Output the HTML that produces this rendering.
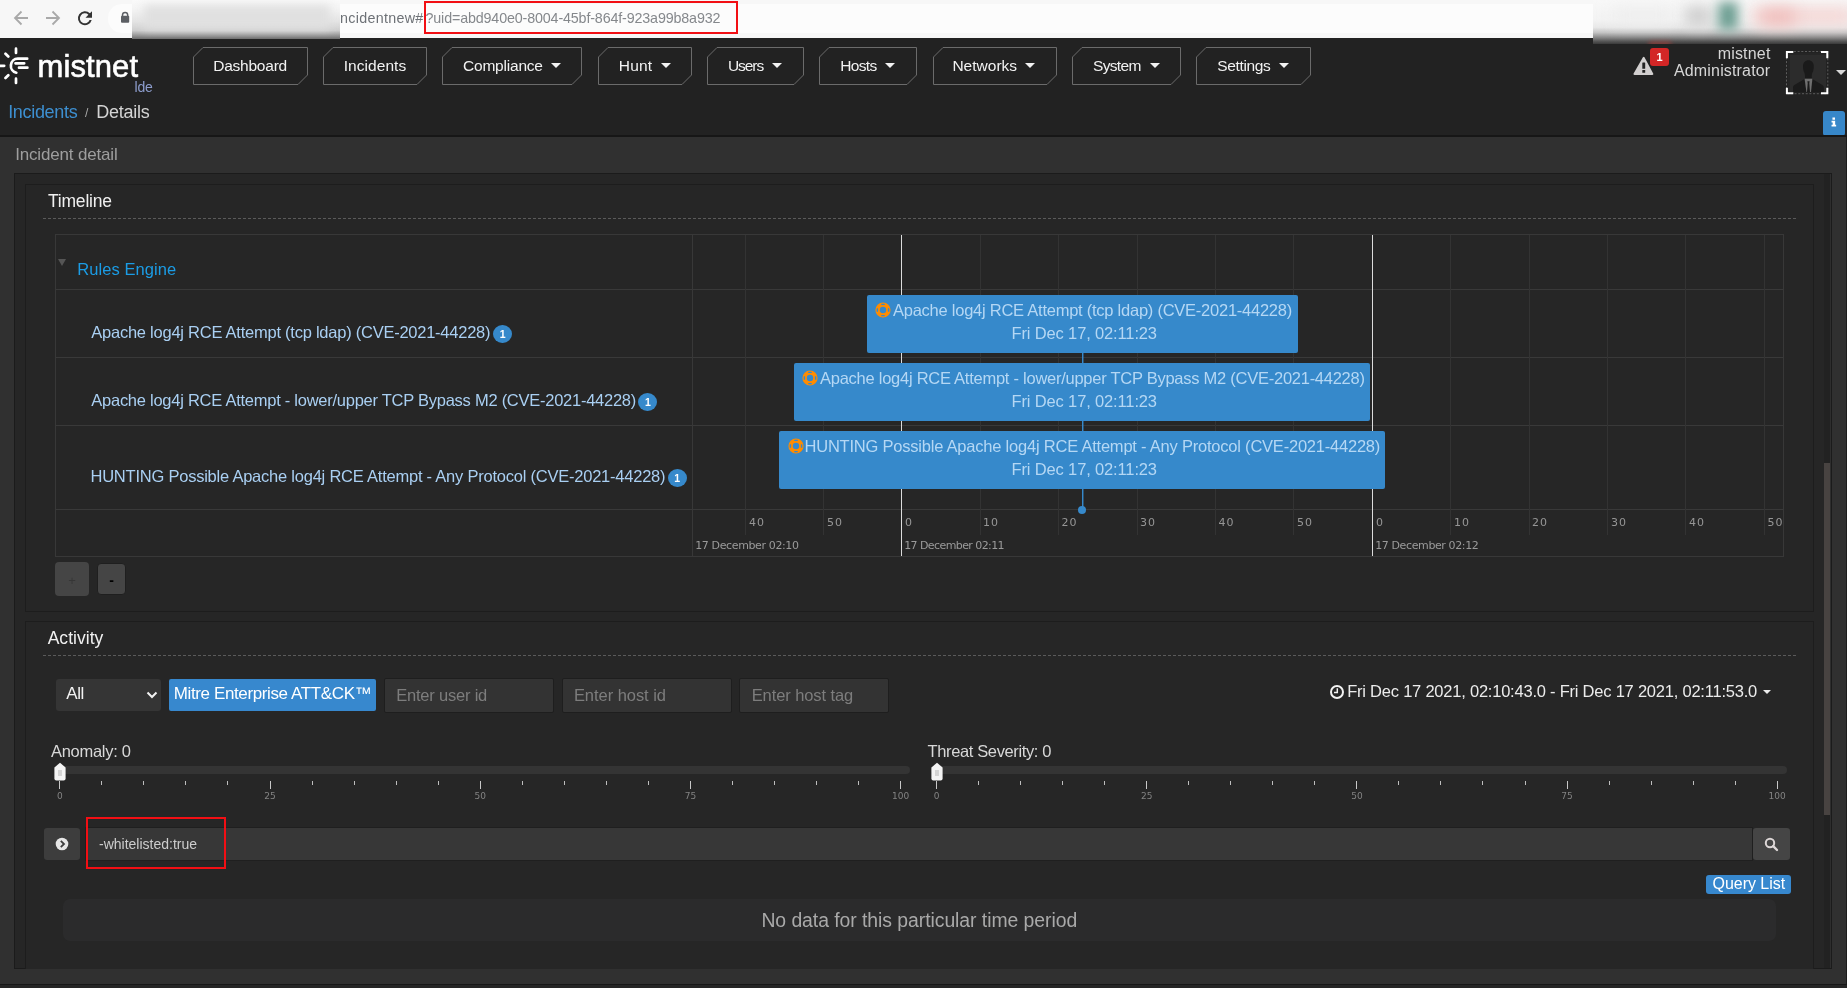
<!DOCTYPE html>
<html lang="en">
<head>
<meta charset="utf-8">
<title>mistnet - Incident detail</title>
<style>
*{box-sizing:border-box;margin:0;padding:0}
html,body{width:1847px;height:988px;overflow:hidden;background:#222222;font-family:"Liberation Sans",sans-serif;color:#ddd}
#root{will-change:transform;position:relative;width:1847px;height:988px;overflow:hidden;background:#222222}
.abs{position:absolute}
.t{position:absolute;white-space:nowrap;line-height:1}
/* browser bar */
#bar{left:0;top:0;width:1847px;height:38px;background:#f7f7f7}
#pill{left:108px;top:4px;width:1500px;height:29px;background:#fcfcfc;border-radius:14px}
.blur{position:absolute;filter:blur(2px)}
/* header */
#hdr{left:0;top:38px;width:1847px;height:98px;background:#222222}
.nb{position:absolute;top:47px;height:38px}
.nb svg{position:absolute;left:0;top:0}
.nb span{position:absolute;top:10px;font-size:15.5px;line-height:18px;color:#f2f2f2;white-space:nowrap}
.nb i{position:absolute;top:16px;width:0;height:0;border-left:5.5px solid transparent;border-right:5.5px solid transparent;border-top:5.5px solid #f2f2f2}
/* panels */
#outer{left:0;top:137px;width:1847px;height:847px;background:#303030}
#body{left:14px;top:173px;width:1818px;height:796px;background:#262626;border:1px solid #1b1b1b}
.panel{position:absolute;background:#262626;border:1px solid #1d1d1d}
.dash{position:absolute;height:1px;background:repeating-linear-gradient(90deg,#5a5a5a 0 3px,transparent 3px 5px)}
.hl{position:absolute;height:1px;background:#393939}
.vl{position:absolute;width:1px;background:#333333}
.vm{position:absolute;width:2px;background:#d8d8d8}
.item{position:absolute;height:58px;background:#3689cb;border-radius:2px}
.item .t{color:#b4d7f4;font-size:16.5px}
.lab{color:#a9cff2;font-size:16.5px}
.badge{position:absolute;width:19px;height:18.4px;border-radius:9.5px/9.2px;background:#3689cb;color:#fff;font-size:10.5px;font-weight:bold;text-align:center;line-height:18px}
.ax{color:#969696;font-size:11px;font-family:'DejaVu Sans','Liberation Sans',sans-serif}
.inp{position:absolute;background:#333333;border:1px solid #1e1e1e;border-radius:2px}
.ph{color:#7d7d7d;font-size:16.5px}
.tick{position:absolute;width:1px;background:#cfcfcf}
.tl{color:#838383;font-size:9px;font-family:'DejaVu Sans','Liberation Sans',sans-serif}
</style>
</head>
<body>
<div id="root">

<!-- ============ browser bar ============ -->
<div id="hdr" class="abs"></div>
<div id="bar" class="abs"></div>
<div id="pill" class="abs"></div>
<svg class="abs" style="left:0;top:0" width="140" height="38" viewBox="0 0 140 38">
  <g fill="none" stroke="#a9a9a9" stroke-width="1.8" stroke-linecap="butt" stroke-linejoin="miter">
    <path d="M28 18H15.5M21.5 11.5L15 18l6.500 6.500"/>
    <path d="M46 18h12.500M52.500 11.500L59 18l-6.500 6.500"/>
  </g>
  <path transform="translate(-0.8 0)" d="M90.700 13.300A7 7 0 1 0 92.500 20h-2.100a5 5 0 1 1-1.200-5.200L86.300 17.700H92.800V11.200z" fill="#333333"/>
  <path d="M122.500 16.500v-1.500a2.600 2.600 0 0 1 5.200 0v1.500" fill="none" stroke="#5c5f64" stroke-width="1.500"/>
  <rect x="121" y="15.800" width="8.200" height="7" rx="1" fill="#5c5f64"/>
</svg>
<div class="t" id="url1" style="left:340px;top:10px;font-size:14.300px;line-height:16px;color:#6d7176;letter-spacing:0.302px">ncidentnew#</div>
<div class="t" id="url2" style="left:425.500px;top:10px;font-size:14.300px;line-height:16px;color:#85888c;letter-spacing:-0.148px">?uid=abd940e0-8004-45bf-864f-923a99b8a932</div>
<div class="abs" style="left:132px;top:0;width:208px;height:39px;overflow:hidden">
  <div class="abs" style="left:0;top:0;width:208px;height:39px;background:linear-gradient(180deg,#fafafa 0,#f3f3f3 25%,#e4e4e4 55%,#cfcfcf 78%,#8e8e8e 93%,#6d6d6d 100%)"></div>
  <div class="blur" style="left:12px;top:5px;width:186px;height:24px;background:#e0e0e0;filter:blur(5px)"></div>
</div>
<div class="abs" style="left:1593px;top:0;width:254px;height:44px;overflow:hidden">
  <div class="abs" style="left:0;top:0;width:254px;height:44px;background:linear-gradient(180deg,#f8f8f8 0,#f3f3f3 45%,#e9e9e9 62%,#c4c4c4 74%,#8a8a8a 85%,#555555 94%,#3a3a3a 100%)"></div>
  <div class="blur" style="left:92px;top:6px;width:26px;height:20px;background:#cfcfcf;filter:blur(7px)"></div>
  <div class="blur" style="left:125px;top:2px;width:20px;height:28px;background:#6d9e92;filter:blur(6px)"></div>
  <div class="blur" style="left:160px;top:8px;width:100px;height:16px;background:#f5d3d1;filter:blur(8px)"></div>
  <div class="blur" style="left:168px;top:10px;width:34px;height:14px;background:#efb9b7;filter:blur(8px)"></div>
  <div class="blur" style="left:20px;top:8px;width:60px;height:14px;background:#ededed;filter:blur(8px)"></div>
  <div class="blur" style="left:56px;top:42px;width:22px;height:5px;background:#b9403c;filter:blur(2.500px);opacity:.7"></div>
</div>
<div class="abs" style="left:424px;top:1px;width:314px;height:33px;border:2px solid #f20f14"></div>
<!--BAR-->

<!-- ============ app header ============ -->
<svg class="abs" style="left:0;top:44px" width="34" height="44" viewBox="0 44 34 44">
 <g fill="none" stroke="#ffffff" stroke-width="2.700" stroke-linecap="round">
  <path d="M16 48.700V53M16 78.700V83M5.500 53.700L8.300 56.500M5.500 78L8.300 75.200M0 65.800H4.200"/>
  <path d="M27.200 58.700H17.800A7.100 7.100 0 0 0 16.300 72.700"/>
  <path d="M15.500 63.300H24.200M19 67.700H27.400"/>
 </g>
</svg>
<div class="t" id="logo" style="left:37.500px;top:48.700px;font-size:31px;line-height:36px;color:#fff;-webkit-text-stroke:0.600px #fff;letter-spacing:0.096px">mistnet</div>
<div class="t" id="lde" style="left:134.500px;top:80.200px;font-size:14px;line-height:15px;color:#8d9dcd;letter-spacing:-0.178px">lde</div>
<div class="t" id="bc1" style="left:8.200px;top:101.500px;font-size:18px;line-height:20px;color:#3d8fd0;letter-spacing:-0.320px">Incidents</div>
<div class="t" id="bc2" style="left:85px;top:105.700px;font-size:12px;line-height:14px;color:#aaa">/</div>
<div class="t" id="bc3" style="left:96.200px;top:101.500px;font-size:18px;line-height:20px;color:#d4d4d4;letter-spacing:-0.255px">Details</div>

<div class="nb" style="left:193px;width:115px"><svg width="115" height="38"><polygon points="10,0.5 114.5,0.5 114.5,28 105,37.5 0.5,37.5 0.5,10" fill="none" stroke="#6b6b6b" stroke-width="1"/></svg><span id="nb0" style="left:20.200px;letter-spacing:-0.229px">Dashboard</span></div>
<div class="nb" style="left:323px;width:104px"><svg width="104" height="38"><polygon points="10,0.5 103.5,0.5 103.5,28 94,37.5 0.5,37.5 0.5,10" fill="none" stroke="#6b6b6b" stroke-width="1"/></svg><span id="nb1" style="left:20.700px;letter-spacing:0.056px">Incidents</span></div>
<div class="nb" style="left:442px;width:140px"><svg width="140" height="38"><polygon points="10,0.5 139.5,0.5 139.5,28 130,37.5 0.5,37.5 0.5,10" fill="none" stroke="#6b6b6b" stroke-width="1"/></svg><span id="nb2" style="left:21.000px;letter-spacing:-0.206px">Compliance</span><i style="left:109.0px"></i></div>
<div class="nb" style="left:598px;width:94px"><svg width="94" height="38"><polygon points="10,0.5 93.5,0.5 93.5,28 84,37.5 0.5,37.5 0.5,10" fill="none" stroke="#6b6b6b" stroke-width="1"/></svg><span id="nb3" style="left:20.700px;letter-spacing:0.249px">Hunt</span><i style="left:62.6px"></i></div>
<div class="nb" style="left:707px;width:97px"><svg width="97" height="38"><polygon points="10,0.5 96.5,0.5 96.5,28 87,37.5 0.5,37.5 0.5,10" fill="none" stroke="#6b6b6b" stroke-width="1"/></svg><span id="nb4" style="left:20.960px;letter-spacing:-1.073px">Users</span><i style="left:65.0px"></i></div>
<div class="nb" style="left:819px;width:98px"><svg width="98" height="38"><polygon points="10,0.5 97.5,0.5 97.5,28 88,37.5 0.5,37.5 0.5,10" fill="none" stroke="#6b6b6b" stroke-width="1"/></svg><span id="nb5" style="left:21.200px;letter-spacing:-0.656px">Hosts</span><i style="left:66.3px"></i></div>
<div class="nb" style="left:933px;width:124px"><svg width="124" height="38"><polygon points="10,0.5 123.5,0.5 123.5,28 114,37.5 0.5,37.5 0.5,10" fill="none" stroke="#6b6b6b" stroke-width="1"/></svg><span id="nb6" style="left:19.420px;letter-spacing:0.013px">Networks</span><i style="left:91.7px"></i></div>
<div class="nb" style="left:1072px;width:109px"><svg width="109" height="38"><polygon points="10,0.5 108.5,0.5 108.5,28 99,37.5 0.5,37.5 0.5,10" fill="none" stroke="#6b6b6b" stroke-width="1"/></svg><span id="nb7" style="left:21.000px;letter-spacing:-0.656px">System</span><i style="left:77.5px"></i></div>
<div class="nb" style="left:1196px;width:115px"><svg width="115" height="38"><polygon points="10,0.5 114.5,0.5 114.5,28 105,37.5 0.5,37.5 0.5,10" fill="none" stroke="#6b6b6b" stroke-width="1"/></svg><span id="nb8" style="left:21.240px;letter-spacing:-0.345px">Settings</span><i style="left:83.0px"></i></div>

<svg class="abs" style="left:1631px;top:54px" width="26" height="24" viewBox="0 0 26 24">
 <path d="M11.900 3.200L2.600 19.500a1 1 0 0 0 .9 1.500H21.300a1 1 0 0 0 .9-1.500L13.500 3.200a.9.900 0 0 0-1.600 0z" fill="#d2cfcf"/>
 <rect x="11.300" y="8.500" width="2.900" height="6.300" rx=".4" fill="#222"/><rect x="11.300" y="16.100" width="2.900" height="2.700" rx=".4" fill="#222"/>
</svg>
<div class="abs" style="left:1650px;top:48px;width:19px;height:18px;background:#d32626;border-radius:3px;color:#fff;font-size:11px;font-weight:bold;text-align:center;line-height:18px">1</div>
<div class="t" id="u1" style="left:1717.680px;top:45px;font-size:16px;line-height:18px;color:#d6d6d6;letter-spacing:0.187px">mistnet</div>
<div class="t" id="u2" style="left:1673.980px;top:62px;font-size:16px;line-height:18px;color:#d6d6d6;letter-spacing:0.162px">Administrator</div>
<svg class="abs" style="left:1785px;top:50px" width="45" height="45" viewBox="0 0 45 45"><rect x="1.500" y="1.500" width="41.300" height="42.200" fill="none" stroke="#5c5c5c" stroke-width="1" stroke-dasharray="2 1.700"/></svg>
<div class="abs" style="left:1788px;top:53px;width:38px;height:39px;background:#252525"></div>
<div class="abs" style="left:1790px;top:55px;width:36px;height:37px;background:#2c2c2c;overflow:hidden">
 <svg width="36" height="37" viewBox="0 0 36 37"><path d="M18.400 5.200c3.200 0 5.400 2.300 5.400 6.200 0 2.300-.4 4.300-1.300 6.200-.5 1.100-.9 2.700-.7 5.600h-6.800c.2-2.900-.2-4.500-.7-5.600-.9-1.900-1.300-3.900-1.300-6.200 0-3.900 2.200-6.200 5.400-6.200z" fill="#1a1a1a"/><path d="M3 37V32.500c0-1.200.6-2 1.800-2.700L15 23.800h6.800l10.200 6c1.200.7 1.800 1.500 1.800 2.700V37z" fill="#1b1b1b"/><path d="M14.600 23.800h7.800L21 37h-4.600z" fill="#6f6f6f"/><path d="M17.400 26.300h2.200l-.3 2 .7 8.700h-3l.7-8.700z" fill="#1b1b1b"/></svg>
</div>
<svg class="abs" style="left:1785px;top:50px" width="45" height="45" viewBox="0 0 45 45"><g fill="none" stroke="#fff" stroke-width="2"><path d="M1.900 8.300V1.900H8.300M36 1.900H42.300V8.300M42.300 37.800V43.200H36M8.300 43.200H1.900V37.800"/></g></svg>
<div class="abs" style="left:1836px;top:70px;width:0;height:0;border-left:5.500px solid transparent;border-right:5.500px solid transparent;border-top:5.500px solid #d8d8d8"></div>
<div class="abs" style="left:1823px;top:111px;width:22px;height:25px;background:#3787c9;border-radius:3px"></div>
<svg class="abs" style="left:1830.300px;top:117.300px" width="7.700" height="10" viewBox="0 0 10 13"><path d="M3.200 0.500h3.300v3H3.200zM2 5h4.700v5H8v2.300H2V10h1.500V7.200H2z" fill="#fff"/></svg>

<!--HDR-->

<!-- ============ panels ============ -->
<div id="outer" class="abs"></div>
<div class="abs" style="left:0;top:135px;width:1847px;height:2px;background:#161616"></div>
<div class="abs" style="left:0;top:984px;width:1847px;height:1px;background:#171717"></div>
<div class="abs" style="left:0;top:985px;width:1847px;height:3px;background:#252525"></div>
<div class="abs" style="left:1846px;top:137px;width:1px;height:847px;background:#1c1c1c"></div>
<div id="body" class="abs"></div>
<div class="t" id="idt" style="left:15.200px;top:145px;font-size:17px;line-height:20px;color:#9e9e9e;letter-spacing:-0.172px">Incident detail</div>
<div class="abs" style="left:1824px;top:174px;width:6px;height:794px;background:#222222"></div>
<div class="abs" style="left:1824px;top:463px;width:6px;height:352px;background:#484341"></div>
<div class="abs" style="left:1830px;top:174px;width:1px;height:794px;background:#2e2e2e"></div>
<div class="panel" style="left:25px;top:184px;width:1789px;height:428px"></div>
<div class="t" id="tlh" style="left:48.000px;top:191px;font-size:17.500px;line-height:20px;color:#f0f0f0;letter-spacing:-0.212px">Timeline</div>
<div class="dash" style="left:43px;top:218px;width:1753px"></div>
<div class="abs" style="left:55px;top:234px;width:1729px;height:323px;border:1px solid #383838"></div>
<div class="hl" style="left:56px;top:289px;width:1727px"></div>
<div class="hl" style="left:56px;top:357px;width:1727px"></div>
<div class="hl" style="left:56px;top:425px;width:1727px"></div>
<div class="hl" style="left:56px;top:509px;width:1727px"></div>
<div class="vl" style="left:745px;top:235px;height:300px"></div>
<div class="vl" style="left:823px;top:235px;height:300px"></div>
<div class="vl" style="left:980px;top:235px;height:300px"></div>
<div class="vl" style="left:1058px;top:235px;height:300px"></div>
<div class="vl" style="left:1137px;top:235px;height:300px"></div>
<div class="vl" style="left:1215px;top:235px;height:300px"></div>
<div class="vl" style="left:1293px;top:235px;height:300px"></div>
<div class="vl" style="left:1450px;top:235px;height:300px"></div>
<div class="vl" style="left:1529px;top:235px;height:300px"></div>
<div class="vl" style="left:1607px;top:235px;height:300px"></div>
<div class="vl" style="left:1685px;top:235px;height:300px"></div>
<div class="vl" style="left:1764px;top:235px;height:300px"></div>
<div class="vl" style="left:692px;top:235px;height:321px;background:#383838"></div>
<div class="abs" style="left:901px;top:235px;width:1px;height:321px;background:#dcdcdc"></div>
<div class="abs" style="left:1372px;top:235px;width:1px;height:321px;background:#dcdcdc"></div>
<div class="abs" style="left:58px;top:259px;width:0;height:0;border-left:4px solid transparent;border-right:4px solid transparent;border-top:7px solid #555"></div>
<div class="t" id="re" style="left:77.200px;top:260px;font-size:16.500px;line-height:19px;color:#1b9ce5;letter-spacing:0.077px">Rules Engine</div>
<div class="t lab" id="lab0" style="left:91.300px;top:323px;line-height:19px;letter-spacing:-0.247px">Apache log4j RCE Attempt (tcp ldap) (CVE-2021-44228)</div>
<div class="badge" style="left:493.200px;top:324.800px">1</div>
<div class="t lab" id="lab1" style="left:91.300px;top:391px;line-height:19px;letter-spacing:-0.258px">Apache log4j RCE Attempt - lower/upper TCP Bypass M2 (CVE-2021-44228)</div>
<div class="badge" style="left:638.300px;top:392.800px">1</div>
<div class="t lab" id="lab2" style="left:90.500px;top:467px;line-height:19px;letter-spacing:-0.229px">HUNTING Possible Apache log4j RCE Attempt - Any Protocol (CVE-2021-44228)</div>
<div class="badge" style="left:667.600px;top:468.800px">1</div>
<div class="abs" style="left:1082px;top:295px;width:1px;height:215px;background:#3689cb;box-shadow:1px 0 0 rgba(54,137,203,.45)"></div>
<div class="abs" style="left:1078px;top:506px;width:8px;height:8px;border-radius:4px;background:#3689cb"></div>
<div class="item" style="left:867px;top:295px;width:431px"><svg class="abs" style="left:8.0px;top:7px" width="16" height="16" viewBox="0 0 16 16"><circle cx="8" cy="8" r="5.400" fill="none" stroke="#ff8c00" stroke-width="4.400"/><g fill="#3689cb"><rect x="6.200" y="1.700" width="3.600" height="1.400" rx=".5"/><rect x="6.200" y="12.900" width="3.600" height="1.400" rx=".5"/><rect x="1.700" y="6.200" width="1.400" height="3.600" rx=".5"/><rect x="12.900" y="6.200" width="1.400" height="3.600" rx=".5"/></g></svg><div class="t" id="it0" style="left:26.0px;top:6px;line-height:19px;letter-spacing:-0.247px">Apache log4j RCE Attempt (tcp ldap) (CVE-2021-44228)</div><div class="t" id="itd0" style="left:144.540px;top:29px;line-height:19px;letter-spacing:-0.146px">Fri Dec 17, 02:11:23</div></div>
<div class="item" style="left:794px;top:363px;width:576px"><svg class="abs" style="left:8.0px;top:7px" width="16" height="16" viewBox="0 0 16 16"><circle cx="8" cy="8" r="5.400" fill="none" stroke="#ff8c00" stroke-width="4.400"/><g fill="#3689cb"><rect x="6.200" y="1.700" width="3.600" height="1.400" rx=".5"/><rect x="6.200" y="12.900" width="3.600" height="1.400" rx=".5"/><rect x="1.700" y="6.200" width="1.400" height="3.600" rx=".5"/><rect x="12.900" y="6.200" width="1.400" height="3.600" rx=".5"/></g></svg><div class="t" id="it1" style="left:26.0px;top:6px;line-height:19px;letter-spacing:-0.258px">Apache log4j RCE Attempt - lower/upper TCP Bypass M2 (CVE-2021-44228)</div><div class="t" id="itd1" style="left:217.540px;top:29px;line-height:19px;letter-spacing:-0.146px">Fri Dec 17, 02:11:23</div></div>
<div class="item" style="left:779px;top:431px;width:606px"><svg class="abs" style="left:8.5px;top:7px" width="16" height="16" viewBox="0 0 16 16"><circle cx="8" cy="8" r="5.400" fill="none" stroke="#ff8c00" stroke-width="4.400"/><g fill="#3689cb"><rect x="6.200" y="1.700" width="3.600" height="1.400" rx=".5"/><rect x="6.200" y="12.900" width="3.600" height="1.400" rx=".5"/><rect x="1.700" y="6.200" width="1.400" height="3.600" rx=".5"/><rect x="12.900" y="6.200" width="1.400" height="3.600" rx=".5"/></g></svg><div class="t" id="it2" style="left:25.500px;top:6px;line-height:19px;letter-spacing:-0.218px">HUNTING Possible Apache log4j RCE Attempt - Any Protocol (CVE-2021-44228)</div><div class="t" id="itd2" style="left:232.540px;top:29px;line-height:19px;letter-spacing:-0.146px">Fri Dec 17, 02:11:23</div></div>
<div class="t ax" id="mn0" style="left:749px;top:516.300px;line-height:14px;letter-spacing:0.9px">40</div>
<div class="t ax" id="mn1" style="left:827px;top:516.300px;line-height:14px;letter-spacing:0.9px">50</div>
<div class="t ax" id="mn2" style="left:905px;top:516.300px;line-height:14px;letter-spacing:0.9px">0</div>
<div class="t ax" id="mn3" style="left:983px;top:516.300px;line-height:14px;letter-spacing:0.9px">10</div>
<div class="t ax" id="mn4" style="left:1061.5px;top:516.300px;line-height:14px;letter-spacing:0.9px">20</div>
<div class="t ax" id="mn5" style="left:1140px;top:516.300px;line-height:14px;letter-spacing:0.9px">30</div>
<div class="t ax" id="mn6" style="left:1218.5px;top:516.300px;line-height:14px;letter-spacing:0.9px">40</div>
<div class="t ax" id="mn7" style="left:1297px;top:516.300px;line-height:14px;letter-spacing:0.9px">50</div>
<div class="t ax" id="mn8" style="left:1376px;top:516.300px;line-height:14px;letter-spacing:0.9px">0</div>
<div class="t ax" id="mn9" style="left:1454px;top:516.300px;line-height:14px;letter-spacing:0.9px">10</div>
<div class="t ax" id="mn10" style="left:1532px;top:516.300px;line-height:14px;letter-spacing:0.9px">20</div>
<div class="t ax" id="mn11" style="left:1611px;top:516.300px;line-height:14px;letter-spacing:0.9px">30</div>
<div class="t ax" id="mn12" style="left:1689px;top:516.300px;line-height:14px;letter-spacing:0.9px">40</div>
<div class="t ax" id="mn13" style="left:1767.5px;top:516.300px;line-height:14px;letter-spacing:0.9px">50</div>
<div class="t ax" id="mj0" style="left:695.200px;top:539.300px;line-height:14px;color:#9a9a9a;letter-spacing:-0.371px">17 December 02:10</div>
<div class="t ax" id="mj1" style="left:904.200px;top:539.300px;line-height:14px;color:#9a9a9a;letter-spacing:-0.584px">17 December 02:11</div>
<div class="t ax" id="mj2" style="left:1375.200px;top:539.300px;line-height:14px;color:#9a9a9a;letter-spacing:-0.384px">17 December 02:12</div>
<div class="abs" style="left:55px;top:562px;width:34px;height:34px;background:#454545;border-radius:4px"></div><div class="t" style="left:68.300px;top:572.800px;font-size:13px;line-height:16px;color:#363636">+</div>
<div class="abs" style="left:97px;top:563px;width:29px;height:32px;background:#454545;border:1px solid #1f1f1f;border-radius:4px"></div><div class="t" style="left:109.300px;top:571.500px;font-size:14px;line-height:16px;font-weight:bold;color:#000">-</div>
<div class="panel" style="left:25px;top:621px;width:1789px;height:348px;border-bottom:none"></div>
<div class="t" id="ach" style="left:47.680px;top:628px;font-size:17.500px;line-height:20px;color:#f0f0f0;letter-spacing:0.025px">Activity</div>
<div class="dash" style="left:43px;top:655px;width:1753px"></div>
<div class="abs" style="left:56px;top:679px;width:105px;height:32px;background:#353535;border-radius:3px"></div>
<div class="t" id="all" style="left:66.300px;top:684px;font-size:17px;line-height:20px;color:#f2f2f2;letter-spacing:-0.453px">All</div>
<svg class="abs" style="left:146px;top:690px" width="12" height="10" viewBox="0 0 12 10"><path d="M1.500 2.500L6 7l4.500-4.500" fill="none" stroke="#f2f2f2" stroke-width="2"/></svg>
<div class="abs" style="left:169px;top:679px;width:207px;height:32px;background:#3788ce;border-radius:2px"></div>
<div class="t" id="mitre" style="left:173.700px;top:684px;font-size:17px;line-height:20px;color:#fff;letter-spacing:-0.373px">Mitre Enterprise ATT&amp;CK™</div>
<div class="inp" style="left:384px;top:678px;width:169.5px;height:35px"></div>
<div class="t ph" id="ph0" style="left:396.200px;top:685px;line-height:20px;letter-spacing:-0.204px">Enter user id</div>
<div class="inp" style="left:562px;top:678px;width:169.70000000000005px;height:35px"></div>
<div class="t ph" id="ph1" style="left:573.880px;top:685px;line-height:20px;letter-spacing:-0.045px">Enter host id</div>
<div class="inp" style="left:739.3px;top:678px;width:149.4000000000001px;height:35px"></div>
<div class="t ph" id="ph2" style="left:751.660px;top:685px;line-height:20px;letter-spacing:-0.089px">Enter host tag</div>
<svg class="abs" style="left:1328.500px;top:684px" width="16" height="16" viewBox="0 0 16 16"><circle cx="8" cy="8" r="6" fill="none" stroke="#f2f2f2" stroke-width="2"/><path d="M8.300 4.300V8.500H5" fill="none" stroke="#f2f2f2" stroke-width="1.500"/></svg>
<div class="t" id="dr" style="left:1347.200px;top:681px;font-size:16.500px;line-height:20px;color:#ececec;letter-spacing:-0.224px">Fri Dec 17 2021, 02:10:43.0 - Fri Dec 17 2021, 02:11:53.0</div>
<div class="abs" style="left:1763px;top:690px;width:0;height:0;border-left:4.500px solid transparent;border-right:4.500px solid transparent;border-top:4.500px solid #ececec"></div>
<div class="t" id="an" style="left:51.000px;top:741px;font-size:16.500px;line-height:20px;color:#d8d8d8;letter-spacing:-0.283px">Anomaly: 0</div>
<div class="abs" style="left:55px;top:766px;width:855px;height:8px;background:#343434;border-radius:4px"></div>
<svg class="abs" style="left:53px;top:762px" width="14" height="20" viewBox="0 0 14 20"><path d="M7 0.800L12.600 5.500V16.500a2 2 0 0 1-2 2H3.400a2 2 0 0 1-2-2V5.500z" fill="#f4f4f4"/><path d="M6 8v6M8 8v6" stroke="#b5b5b5" stroke-width="1"/></svg>
<div class="tick" style="left:59px;top:781px;height:8px;background:#c8c8c8"></div>
<div class="tick" style="left:101px;top:781px;height:4px;background:#bdbdbd"></div>
<div class="tick" style="left:143px;top:781px;height:4px;background:#bdbdbd"></div>
<div class="tick" style="left:185px;top:781px;height:4px;background:#bdbdbd"></div>
<div class="tick" style="left:227px;top:781px;height:4px;background:#bdbdbd"></div>
<div class="tick" style="left:270px;top:781px;height:8px;background:#c8c8c8"></div>
<div class="tick" style="left:312px;top:781px;height:4px;background:#bdbdbd"></div>
<div class="tick" style="left:354px;top:781px;height:4px;background:#bdbdbd"></div>
<div class="tick" style="left:396px;top:781px;height:4px;background:#bdbdbd"></div>
<div class="tick" style="left:438px;top:781px;height:4px;background:#bdbdbd"></div>
<div class="tick" style="left:480px;top:781px;height:8px;background:#c8c8c8"></div>
<div class="tick" style="left:522px;top:781px;height:4px;background:#bdbdbd"></div>
<div class="tick" style="left:564px;top:781px;height:4px;background:#bdbdbd"></div>
<div class="tick" style="left:606px;top:781px;height:4px;background:#bdbdbd"></div>
<div class="tick" style="left:648px;top:781px;height:4px;background:#bdbdbd"></div>
<div class="tick" style="left:690px;top:781px;height:8px;background:#c8c8c8"></div>
<div class="tick" style="left:732px;top:781px;height:4px;background:#bdbdbd"></div>
<div class="tick" style="left:774px;top:781px;height:4px;background:#bdbdbd"></div>
<div class="tick" style="left:816px;top:781px;height:4px;background:#bdbdbd"></div>
<div class="tick" style="left:858px;top:781px;height:4px;background:#bdbdbd"></div>
<div class="tick" style="left:900px;top:781px;height:8px;background:#c8c8c8"></div>
<div class="t tl" style="left:44.8px;top:791px;width:30px;text-align:center;line-height:10px">0</div>
<div class="t tl" style="left:255.0px;top:791px;width:30px;text-align:center;line-height:10px">25</div>
<div class="t tl" style="left:465.2px;top:791px;width:30px;text-align:center;line-height:10px">50</div>
<div class="t tl" style="left:675.4px;top:791px;width:30px;text-align:center;line-height:10px">75</div>
<div class="t tl" style="left:885.6px;top:791px;width:30px;text-align:center;line-height:10px">100</div>
<div class="t" id="ts" style="left:927.500px;top:741px;font-size:16.500px;line-height:20px;color:#d8d8d8;letter-spacing:-0.367px">Threat Severity: 0</div>
<div class="abs" style="left:931px;top:766px;width:855.5px;height:8px;background:#343434;border-radius:4px"></div>
<svg class="abs" style="left:930px;top:762px" width="14" height="20" viewBox="0 0 14 20"><path d="M7 0.800L12.600 5.500V16.500a2 2 0 0 1-2 2H3.400a2 2 0 0 1-2-2V5.500z" fill="#f4f4f4"/><path d="M6 8v6M8 8v6" stroke="#b5b5b5" stroke-width="1"/></svg>
<div class="tick" style="left:936px;top:781px;height:8px;background:#c8c8c8"></div>
<div class="tick" style="left:978px;top:781px;height:4px;background:#bdbdbd"></div>
<div class="tick" style="left:1020px;top:781px;height:4px;background:#bdbdbd"></div>
<div class="tick" style="left:1062px;top:781px;height:4px;background:#bdbdbd"></div>
<div class="tick" style="left:1104px;top:781px;height:4px;background:#bdbdbd"></div>
<div class="tick" style="left:1146px;top:781px;height:8px;background:#c8c8c8"></div>
<div class="tick" style="left:1188px;top:781px;height:4px;background:#bdbdbd"></div>
<div class="tick" style="left:1230px;top:781px;height:4px;background:#bdbdbd"></div>
<div class="tick" style="left:1272px;top:781px;height:4px;background:#bdbdbd"></div>
<div class="tick" style="left:1314px;top:781px;height:4px;background:#bdbdbd"></div>
<div class="tick" style="left:1356px;top:781px;height:8px;background:#c8c8c8"></div>
<div class="tick" style="left:1398px;top:781px;height:4px;background:#bdbdbd"></div>
<div class="tick" style="left:1440px;top:781px;height:4px;background:#bdbdbd"></div>
<div class="tick" style="left:1482px;top:781px;height:4px;background:#bdbdbd"></div>
<div class="tick" style="left:1525px;top:781px;height:4px;background:#bdbdbd"></div>
<div class="tick" style="left:1567px;top:781px;height:8px;background:#c8c8c8"></div>
<div class="tick" style="left:1609px;top:781px;height:4px;background:#bdbdbd"></div>
<div class="tick" style="left:1651px;top:781px;height:4px;background:#bdbdbd"></div>
<div class="tick" style="left:1693px;top:781px;height:4px;background:#bdbdbd"></div>
<div class="tick" style="left:1735px;top:781px;height:4px;background:#bdbdbd"></div>
<div class="tick" style="left:1777px;top:781px;height:8px;background:#c8c8c8"></div>
<div class="t tl" style="left:921.6px;top:791px;width:30px;text-align:center;line-height:10px">0</div>
<div class="t tl" style="left:1131.8px;top:791px;width:30px;text-align:center;line-height:10px">25</div>
<div class="t tl" style="left:1341.9px;top:791px;width:30px;text-align:center;line-height:10px">50</div>
<div class="t tl" style="left:1552.1px;top:791px;width:30px;text-align:center;line-height:10px">75</div>
<div class="t tl" style="left:1762.2px;top:791px;width:30px;text-align:center;line-height:10px">100</div>
<div class="abs" style="left:44px;top:828px;width:36px;height:32px;background:#3d3d3d;border-radius:3px"></div>
<svg class="abs" style="left:55px;top:837px" width="14" height="14" viewBox="0 0 14 14"><circle cx="7" cy="7" r="6.300" fill="#e6e6e6"/><path d="M5.800 3.800L9 7l-3.200 3.200" fill="none" stroke="#3d3d3d" stroke-width="1.800"/></svg>
<div class="abs" style="left:85px;top:827px;width:1668px;height:34px;background:#373737;border:1px solid #1f1f1f"></div>
<div class="t" id="q" style="left:99.000px;top:836px;font-size:14px;line-height:16px;color:#cdcdcd;letter-spacing:-0.003px">-whitelisted:true</div>
<div class="abs" style="left:1753px;top:828px;width:37px;height:32px;background:#454545;border-radius:3px"></div>
<svg class="abs" style="left:1764px;top:837px" width="15" height="15" viewBox="0 0 15 15"><circle cx="6" cy="6" r="4.200" fill="none" stroke="#ddd7d7" stroke-width="2"/><path d="M9.200 9.200L13 13" stroke="#ddd7d7" stroke-width="2.400" stroke-linecap="round"/></svg>
<div class="abs" style="left:86px;top:817px;width:140px;height:52px;border:2px solid #f20f14"></div>
<div class="abs" style="left:1706px;top:875px;width:85px;height:19px;background:#3788ce;border-radius:3px"></div>
<div class="t" id="ql" style="left:1712.500px;top:875px;font-size:16px;line-height:18px;color:#fff;letter-spacing:-0.036px">Query List</div>
<div class="abs" style="left:63px;top:899px;width:1713px;height:42px;background:#2b2b2c;border-radius:7px"></div>
<div class="t" id="nd" style="left:761.400px;top:909px;font-size:19.400px;line-height:22px;color:#a9a9a9;letter-spacing:-0.057px">No data for this particular time period</div>
<!--ACT-->

</div>
</body>
</html>
